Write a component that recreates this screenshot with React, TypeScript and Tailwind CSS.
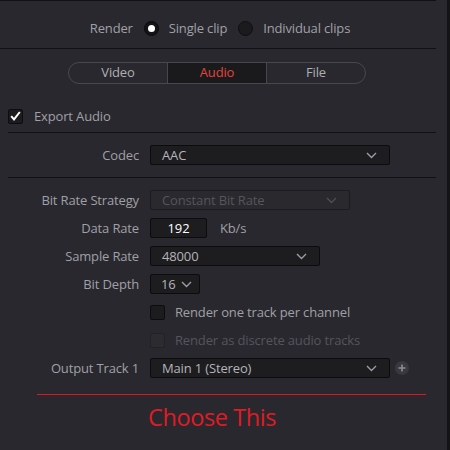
import React from 'react';

const font = { fontFamily: '"Open Sans", "Noto Sans", sans-serif' };

function Chevron({ dim = false }: { dim?: boolean }) {
  return (
    <svg width="11" height="7" viewBox="0 0 11 7" className="shrink-0">
      <path
        d="M1 1l4.5 4.5L10 1"
        fill="none"
        stroke={dim ? '#4e4e54' : '#9c9ca2'}
        strokeWidth="1.4"
      />
    </svg>
  );
}

function Select({
  value,
  width,
  disabled = false,
}: {
  value: string;
  width: string;
  disabled?: boolean;
}) {
  return (
    <div
      className={`${width} h-[20px] flex items-center justify-between pl-[11px] pr-[12px] rounded-[2px] border ${
        disabled
          ? 'border-[#1c1c20] bg-[#29292e] text-[#56565c]'
          : 'border-[#0c0c0e] bg-[#1d1d20] text-[#b4b4b8]'
      }`}
    >
      <span className="text-[13px] leading-none">{value}</span>
      <Chevron dim={disabled} />
    </div>
  );
}

function Row({ label, children }: { label?: string; children: React.ReactNode }) {
  return (
    <div className="flex items-center h-[20px]">
      <div className="w-[140px] pr-[1px] text-right text-[13px] text-[#a0a0a6] leading-none">{label}</div>
      <div className="ml-[10px] flex items-center">{children}</div>
    </div>
  );
}

function Check({ checked = false, disabled = false }: { checked?: boolean; disabled?: boolean }) {
  return (
    <div
      className={`w-[15px] h-[15px] rounded-[2px] border flex items-center justify-center ${
        disabled ? 'border-[#222226] bg-[#2b2b30]' : 'border-[#0d0d0f] bg-[#1c1c1f]'
      }`}
    >
      {checked && (
        <svg width="11" height="10" viewBox="0 0 11 10">
          <path d="M1.2 5.2l2.8 3.2L9.8 1" fill="none" stroke="#ffffff" strokeWidth="2" />
        </svg>
      )}
    </div>
  );
}

export default function App() {
  return (
    <div className="w-[450px] h-[450px] bg-[#28282e] flex overflow-hidden tracking-[-0.15px]" style={font}>
      <div className="w-[436px] flex flex-col border-t border-[#111113]">
        {/* render mode */}
        <div className="h-[48px] pt-[8px] flex items-center justify-center gap-[10px] text-[13px] text-[#a0a0a6] border-b border-[#111113] pl-[4px]">
          <span className="mr-[1px]">Render</span>
          <div className="w-[15px] h-[15px] rounded-full bg-[#141416] border border-[#0a0a0b] flex items-center justify-center">
            <div className="w-[7px] h-[7px] rounded-full bg-white" />
          </div>
          <span className="mr-[1px]">Single clip</span>
          <div className="w-[15px] h-[15px] rounded-full bg-[#1b1b1e] border border-[#0f0f11]" />
          <span>Individual clips</span>
        </div>

        {/* tabs */}
        <div className="mt-[13px] ml-[68px] w-[298px] h-[22px] flex rounded-full border border-[#47474d] overflow-hidden text-[13px]">
          <div className="flex-1 flex items-center justify-center text-[#b0b0b4]">Video</div>
          <div className="flex-1 flex items-center justify-center bg-[#1a1a1d] text-[#e2453b] border-x border-[#47474d]">Audio</div>
          <div className="flex-1 flex items-center justify-center text-[#b0b0b4]">File</div>
        </div>

        {/* export audio */}
        <div className="mt-[24px] ml-[8px] flex items-center gap-[11px] h-[16px]">
          <Check checked />
          <span className="text-[13px] text-[#a0a0a6] leading-none">Export Audio</span>
        </div>
        <div className="mt-[8px] ml-[8px] h-px bg-[#111113]" />

        <div className="mt-[12px]">
          <Row label="Codec">
            <Select value="AAC" width="w-[240px]" />
          </Row>
        </div>
        <div className="mt-[12px] ml-[8px] h-px bg-[#111113]" />

        <div className="mt-[12px] flex flex-col gap-[8px]">
          <Row label="Bit Rate Strategy">
            <Select value="Constant Bit Rate" width="w-[200px]" disabled />
          </Row>
          <Row label="Data Rate">
            <div className="w-[57px] h-[20px] rounded-[2px] border border-[#0c0c0e] bg-[#1d1d20] flex items-center justify-center text-[13px] text-white leading-none">
              192
            </div>
            <span className="ml-[13px] text-[13px] text-[#a0a0a6] leading-none">Kb/s</span>
          </Row>
          <Row label="Sample Rate">
            <Select value="48000" width="w-[170px]" />
          </Row>
          <Row label="Bit Depth">
            <div className="w-[50px] h-[20px] rounded-[2px] border border-[#0c0c0e] bg-[#1d1d20] flex items-center gap-[5px] pl-[10px] text-[13px] text-[#b4b4b8] leading-none">
              <span>16</span>
              <Chevron />
            </div>
          </Row>
        </div>

        <div className="mt-[8px] flex flex-col gap-[8px]">
          <Row>
            <Check />
            <span className="ml-[10px] text-[13px] text-[#a0a0a6] leading-none">Render one track per channel</span>
          </Row>
          <Row>
            <Check disabled />
            <span className="ml-[10px] text-[13px] text-[#55555b] leading-none">Render as discrete audio tracks</span>
          </Row>
        </div>

        <div className="mt-[8px]">
          <Row label="Output Track 1">
            <Select value="Main 1 (Stereo)" width="w-[240px]" />
            <div className="ml-[5px] w-[14px] h-[14px] rounded-full bg-[#38383e] flex items-center justify-center">
              <svg width="8" height="8" viewBox="0 0 8 8">
                <path d="M4 0.5v7M0.5 4h7" stroke="#8c8c92" strokeWidth="1.6" />
              </svg>
            </div>
          </Row>
        </div>

        <div className="mt-[16px] ml-[37px] w-[389px] h-px bg-[#e5131c]" />
        <div className="mt-[6px] ml-[148px] text-[23.5px] leading-[32px] tracking-[-0.4px] text-[#e01b24]">Choose This</div>
      </div>
      <div className="flex-1" />
      <div className="w-[3px] bg-[#141416]" />
    </div>
  );
}
